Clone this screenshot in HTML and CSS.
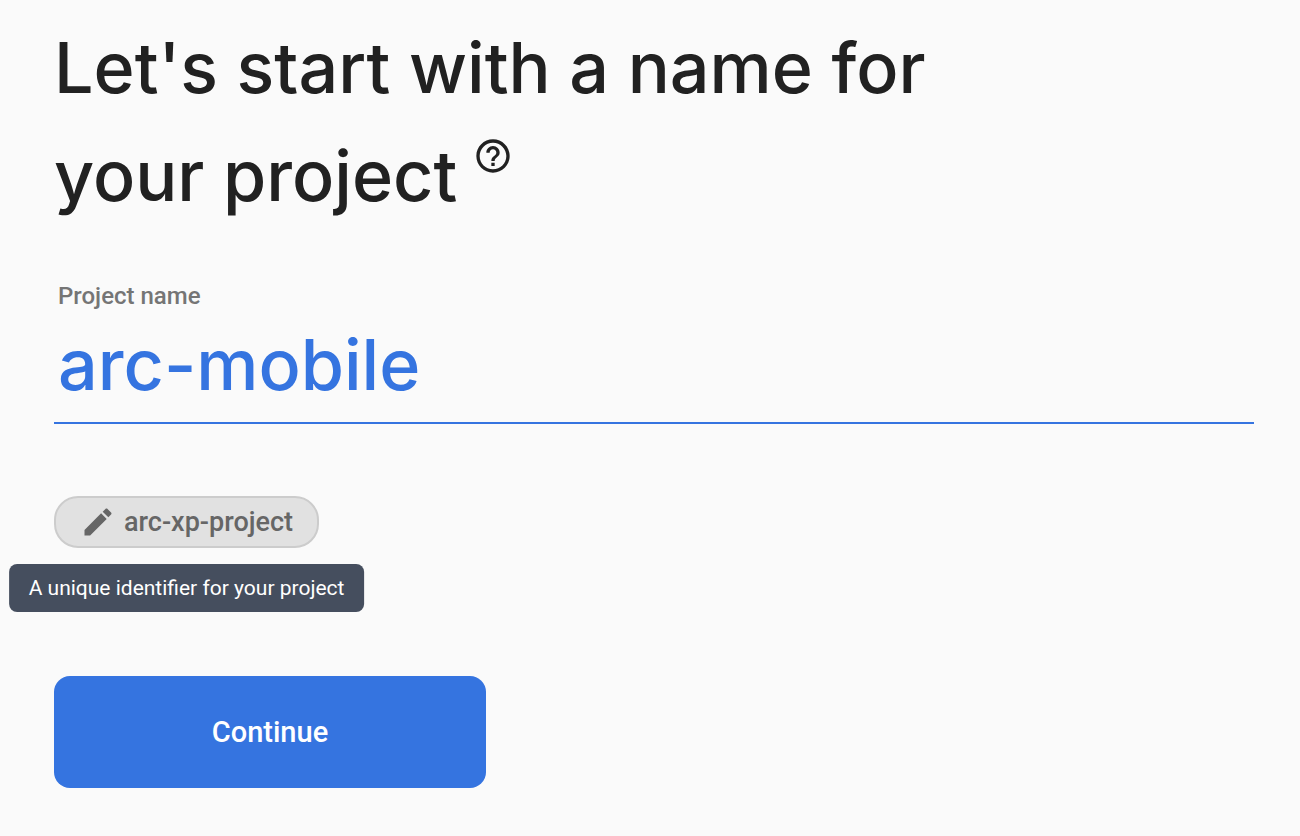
FILE: index.html
```html
<!DOCTYPE html>
<html lang="en">
<head>
<meta charset="utf-8">
<meta name="viewport" content="width=device-width, initial-scale=1">
<title>Create a project</title>
<link rel="stylesheet" href="styles.css">
</head>
<body>
<main class="page">
  <h1 class="title">Let's start with a name for<br>your project<button class="help" type="button" aria-label="Help"><svg viewBox="0 0 24 24" aria-hidden="true"><path d="M11 18h2v-2h-2v2zm1-16C6.480 2 2 6.480 2 12s4.480 10 10 10 10-4.480 10-10S17.520 2 12 2zm0 18c-4.410 0-8-3.590-8-8s3.590-8 8-8 8 3.590 8 8-3.590 8-8 8zm0-14c-2.210 0-4 1.790-4 4h2c0-1.100.9-2 2-2s2 .9 2 2c0 2-3 1.750-3 5h2c0-2.250 3-2.500 3-5 0-2.210-1.790-4-4-4z"/></svg></button></h1>
  <form class="form">
    <label class="label" for="name">Project name</label>
    <input class="name" id="name" type="text" value="arc-mobile" autocomplete="off" spellcheck="false">
    <div class="identifier">
      <button class="chip" type="button" aria-describedby="tip"><svg class="pencil" viewBox="0 0 24 24" aria-hidden="true"><path d="M3 17.250V21h3.750L17.810 9.940l-3.750-3.750L3 17.250zM20.710 7.040c.39-.39.39-1.020 0-1.410l-2.340-2.340c-.39-.39-1.020-.39-1.410 0l-1.830 1.830 3.750 3.750 1.830-1.830z"/></svg>arc-xp-project</button>
      <div class="tooltip" id="tip" role="tooltip">A unique identifier for your project</div>
    </div>
    <button class="continue" type="button">Continue</button>
  </form>
</main>
</body>
</html>
```
FILE: styles.css
```css
* {
  box-sizing: border-box;
}

body {
  margin: 0;
  background: #fafafa;
  color: #212121;
  font-family: Roboto, sans-serif;
}

.page {
  padding: 14px 46px 48px 54px;
}

.title {
  margin: 0;
  font-family: Inter, Roboto, sans-serif;
  font-size: 70px;
  font-weight: 500;
  line-height: 108px;
}

.help {
  width: 40px;
  height: 40px;
  margin-left: 16px;
  padding: 0;
  border: 0;
  background: none;
  color: inherit;
  vertical-align: 25px;
  line-height: 0;
}

.help svg {
  width: 40px;
  height: 40px;
  fill: currentColor;
}

.form {
  display: flex;
  flex-direction: column;
  align-items: flex-start;
  margin-top: 52px;
}

.label {
  padding-left: 4px;
  color: #757575;
  font-size: 24px;
  font-weight: 500;
  line-height: 28px;
}

.name {
  width: 100%;
  height: 114px;
  padding: 0 4px 4px;
  border: 0;
  border-bottom: 2px solid #3574e0;
  border-radius: 0;
  outline: 0;
  background: none;
  color: #3574e0;
  font-family: Inter, Roboto, sans-serif;
  font-size: 70px;
  font-weight: 500;
}

.identifier {
  position: relative;
  margin-top: 72px;
}

.chip {
  display: flex;
  align-items: center;
  gap: 8px;
  height: 52px;
  padding: 0 24px;
  border: 2px solid #cccccc;
  border-radius: 24px;
  background: #e1e1e1;
  color: #666666;
  font-family: inherit;
  font-size: 27px;
  font-weight: 500;
}

.pencil {
  width: 36px;
  height: 36px;
  fill: currentColor;
}

.tooltip {
  position: absolute;
  top: 68px;
  left: 50%;
  padding: 0 20px;
  border-radius: 8px;
  transform: translateX(-50%);
  background: #454e5e;
  color: #ffffff;
  font-size: 21px;
  line-height: 48px;
  white-space: nowrap;
}

.continue {
  width: 432px;
  max-width: 100%;
  height: 112px;
  margin-top: 128px;
  border: 0;
  border-radius: 16px;
  background: #3574e0;
  color: #ffffff;
  font-family: inherit;
  font-size: 29px;
  font-weight: 500;
}
```
